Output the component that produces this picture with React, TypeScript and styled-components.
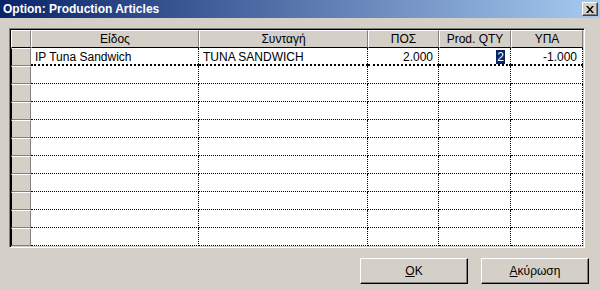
import styled, { createGlobalStyle } from 'styled-components';

const GlobalStyle = createGlobalStyle`
  html, body {
    margin: 0;
    padding: 0;
    background: #d4d0c8;
    overflow: hidden;
  }
  * {
    box-sizing: border-box;
  }
`;

const columns = [
  { title: 'Είδος', align: 'left' },
  { title: 'Συνταγή', align: 'left' },
  { title: 'ΠΟΣ', align: 'right' },
  { title: 'Prod. QTY', align: 'right' },
  { title: 'ΥΠΑ', align: 'right' },
] as const;

const EMPTY_ROWS = 10;

const App = () => {
  return (
    <Window>
      <GlobalStyle />
      <TitleBar>
        <Title>Option: Production Articles</Title>
        <CloseButton>
          <svg width="8" height="7" viewBox="0 0 8 7">
            <path d="M0 0h2l2 2.5L6 0h2L5 3.5 8 7H6L4 4.5 2 7H0l3-3.5z" fill="#000" />
          </svg>
        </CloseButton>
      </TitleBar>
      <Body>
        <Grid>
          <HeaderCell />
          {columns.map((c) => (
            <HeaderCell key={c.title}>{c.title}</HeaderCell>
          ))}

          <Indicator />
          <Cell $align="left" $current>IP Tuna Sandwich</Cell>
          <Cell $align="left" $current>TUNA SANDWICH</Cell>
          <Cell $align="right" $current>2.000</Cell>
          <Cell $align="right" $current>
            <Selected>2</Selected>
          </Cell>
          <Cell $align="right" $current>-1.000</Cell>

          {Array.from({ length: EMPTY_ROWS }).map((_, r) => (
            <Row key={r}>
              <Indicator />
              {columns.map((c) => (
                <Cell key={c.title} $align={c.align} />
              ))}
            </Row>
          ))}
        </Grid>
        <Buttons>
          <Button>
            <u>O</u>K
          </Button>
          <Button>
            <u>Α</u>κύρωση
          </Button>
        </Buttons>
      </Body>
    </Window>
  );
};

export default App;

const Window = styled.div`
  width: 600px;
  height: 290px;
  display: flex;
  flex-direction: column;
  background: #d4d0c8;
  font-family: 'Liberation Sans', Arial, sans-serif;
  font-size: 12px;
  color: #000;
`;

const TitleBar = styled.div`
  height: 18px;
  display: flex;
  align-items: center;
  justify-content: space-between;
  padding: 0 2px 0 3px;
  background: linear-gradient(to right, #0a246a, #a6caf0);
`;

const Title = styled.span`
  color: #fff;
  font-weight: bold;
  font-size: 12px;
`;

const CloseButton = styled.div`
  width: 16px;
  height: 14px;
  display: flex;
  align-items: center;
  justify-content: center;
  background: #d4d0c8;
  border-top: 1px solid #fff;
  border-left: 1px solid #fff;
  border-right: 1px solid #404040;
  border-bottom: 1px solid #404040;
  box-shadow: inset -1px -1px 0 #808080;
`;

const Body = styled.div`
  flex: 1;
  display: flex;
  flex-direction: column;
  padding: 10px 0 0 9px;
`;

const Grid = styled.div`
  width: 576px;
  display: grid;
  grid-template-columns: 20px 168px 169px 71px 72px 72px;
  grid-auto-rows: 18px;
  border-top: 1px solid #808080;
  border-left: 1px solid #808080;
  border-right: 1px solid #fff;
  border-bottom: 1px solid #fff;
  box-shadow: inset 1px 1px 0 #000, inset -1px -1px 0 #d4d0c8;
  padding: 1px;
  background: #fff;
`;

const Row = styled.div`
  display: contents;
`;

const HeaderCell = styled.div`
  background: #d4d0c8;
  border-top: 1px solid #fff;
  border-left: 1px solid #fff;
  border-right: 1px solid #808080;
  border-bottom: 1px solid #000;
  text-align: center;
  line-height: 17px;
  white-space: nowrap;
  overflow: hidden;
`;

const Indicator = styled.div`
  background: #d4d0c8;
  border-top: 1px solid #fff;
  border-right: 1px solid #808080;
  border-bottom: 1px solid #808080;
  border-left: 1px solid #000;
`;

const Cell = styled.div<{ $align: 'left' | 'right'; $current?: boolean }>`
  background: #fff;
  border-right: 1px dotted #000;
  border-bottom: ${(p) => (p.$current ? '2px dotted #000' : '1px dotted #000')};
  text-align: ${(p) => p.$align};
  padding: ${(p) => (p.$align === 'left' ? '1px 3px 0 4px' : '1px 5px 0 3px')};
  line-height: 16px;
  white-space: nowrap;
  overflow: hidden;
`;

const Selected = styled.span`
  display: inline-block;
  background: #0a246a;
  color: #fff;
  padding: 0 1px;
  line-height: 15px;
`;

const Buttons = styled.div`
  display: flex;
  justify-content: flex-end;
  gap: 13px;
  margin-top: 10px;
  padding-right: 11px;
`;

const Button = styled.button`
  width: 108px;
  height: 26px;
  background: #d4d0c8;
  font-family: 'Liberation Sans', Arial, sans-serif;
  font-size: 12px;
  color: #000;
  border-top: 1px solid #fff;
  border-left: 1px solid #fff;
  border-right: 1px solid #000;
  border-bottom: 1px solid #000;
  box-shadow: inset -1px -1px 0 #808080;
  padding: 0;
  u {
    text-decoration: underline;
  }
`;
